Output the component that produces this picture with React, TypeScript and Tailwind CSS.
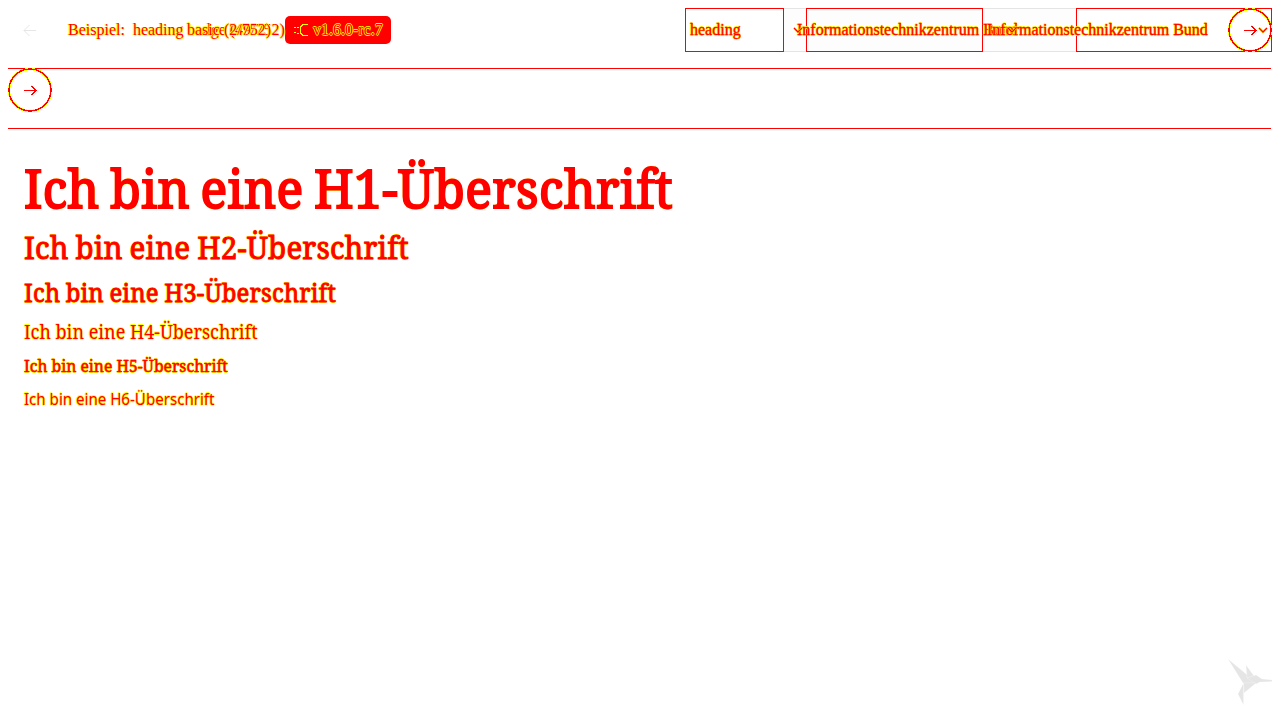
const glow = "[text-shadow:0.7px_0_#ff0,-0.7px_0_#ff0,0_0.7px_#ff0,0_-0.7px_#ff0]";
const half = "[text-shadow:-1px_0_#ff0,1px_1px_#ff0]";
const serif = "font-['Noto_Serif','DejaVu_Serif_Condensed',serif]";

const headings = [
  { level: 1, cls: "h-[60px] leading-[61px] text-[52px] tracking-[0.4px] [word-spacing:-3px] scale-x-[.959] [-webkit-text-stroke:1.9px_#f00] " + serif },
  { level: 2, cls: "mt-[10px] h-[40px] leading-[41px] text-[31px] tracking-[0.2px] [word-spacing:-1px] scale-x-[.951] [-webkit-text-stroke:0.9px_#f00] " + serif },
  { level: 3, cls: "mt-[7px] h-[36px] leading-[37px] text-[25px] tracking-[0.2px] [word-spacing:-1px] scale-x-[.955] [-webkit-text-stroke:0.8px_#f00] " + serif },
  { level: 4, cls: "mt-[7px] h-[28px] leading-[30px] text-[20px] scale-x-[.9] " + serif },
  { level: 5, cls: "mt-[8px] h-[24px] leading-[26px] text-[16.5px] scale-x-[.952] [-webkit-text-stroke:0.5px_#f00] " + serif },
  { level: 6, cls: "mt-[10px] h-[24px] leading-[24px] text-[16px] scale-x-[.943] font-['Noto_Sans',sans-serif]" },
];

function CircleArrow({ className = "" }: { className?: string }) {
  return (
    <svg className={"size-[44px] " + className} viewBox="0 0 44 44" fill="none" shapeRendering="crispEdges">
      <circle cx="22" cy="22" r="21" stroke="#ff0" strokeWidth="2.4" />
      <circle cx="22" cy="22" r="21" stroke="#f00" strokeWidth="1.4" />
      <path d="M23 17.500l5 5-5 5" stroke="#ff0" strokeWidth="2" />
      <path d="M16 22.500h12M23.500 18l4.500 4.500-4.500 4.500" stroke="#f00" />
    </svg>
  );
}

function Chevron({ className }: { className: string }) {
  return (
    <svg className={"absolute top-[18px] h-[8px] w-[10px] " + className} viewBox="0 0 10 8" fill="none">
      <path d="M1 2l4 4 4-4" stroke="#ff0" strokeWidth="2.4" />
      <path d="M1 2l4 4 4-4" stroke="#f00" strokeWidth="1.3" />
    </svg>
  );
}

export default function App() {
  return (
    <div className="h-[720px] w-[1280px] overflow-hidden bg-white p-2 font-['Liberation_Serif',serif] text-[16px] text-[#f00]">
      <header className="relative flex h-[44px] items-center whitespace-nowrap">
        <svg className="ml-[15px] size-[14px] shrink-0" viewBox="0 0 14 14" fill="none" stroke="#e6e6e6">
          <path d="M1 7.5h12M6.5 2l-5.5 5.5 5.5 5.5" />
        </svg>
        <div className="relative ml-[31px] w-[217px] shrink-0 leading-[44px]">
          <span className={"block " + half}>Beispiel: &nbsp;heading badge (49/752)</span>
          <span className={"absolute top-0 left-[119px] " + glow}>basic (2/752)</span>
        </div>
        <div className={"flex h-[28px] w-[106px] shrink-0 items-center rounded-[5px] bg-[#f00] pl-[9px] " + glow}>
          <svg className="mr-[5px] h-[14px] w-[14px]" viewBox="0 0 14 14" fill="none" stroke="#ff0" shapeRendering="crispEdges">
            <path d="M0 4.5h2M0 9.5h2M3 4h2M3 10h2M14 1.500h-5l-3 3v5l3 3h5" />
          </svg>
          v1.6.0-rc.7
        </div>
        <div className="ml-auto flex h-[44px] w-[587px] shrink-0">
          <div className={"w-[99px] border border-[#f00] pl-1 leading-[42px] [-webkit-text-stroke:0.3px_#f00] " + glow}>heading</div>
          <div className="w-[22px] border-y border-[#e4e4e4] bg-[#fdfdfd]" />
          <div className="w-[177px] border border-[#f00] bg-[#fdfdfd]" />
          <div className="w-[93px] border-y border-[#e4e4e4] bg-[#fdfdfd]" />
          <div className="w-[196px] border border-[#f00]" />
        </div>
        <span className={"absolute top-0 left-[789px] leading-[44px] [-webkit-text-stroke:0.3px_#f00] " + glow}>Informationstechnikzentrum Bund</span>
        <span className={"absolute top-0 left-[979px] leading-[44px] [-webkit-text-stroke:0.3px_#f00] " + glow}>Informationstechnikzentrum Bund</span>
        <Chevron className="left-[785px]" />
        <Chevron className="left-[999px]" />
        <CircleArrow className="absolute top-0 right-0" />
        <Chevron className="left-[1250px]" />
      </header>
      <div className="mt-4 mr-px h-[61px] border-y border-[#f00]">
        <CircleArrow className="-mt-px" />
      </div>
      <main className="flex flex-col items-start px-4 pt-[28px]">
        {headings.map((h) => (
          <div key={h.level} className={"origin-left whitespace-nowrap " + glow + " " + h.cls}>
            Ich bin eine H{h.level}-Überschrift
          </div>
        ))}
      </main>
      <svg className="absolute top-[655px] left-[1224px] h-[52px] w-[50px]" viewBox="1224 655 50 52" fill="#e5e5e5" stroke="#fff" strokeWidth=".2">
        <path d="M1228 659L1257 683L1243 683Z" />
        <path d="M1246 665L1254 676L1247 678Z" />
        <path d="M1247 678L1256 675L1262 679L1272 680V681.500L1260 682L1256 684Z" />
        <path d="M1243.500 683H1256L1244 693Z" />
        <path d="M1243.500 683L1238 694L1243.500 705Z" />
      </svg>
    </div>
  );
}
